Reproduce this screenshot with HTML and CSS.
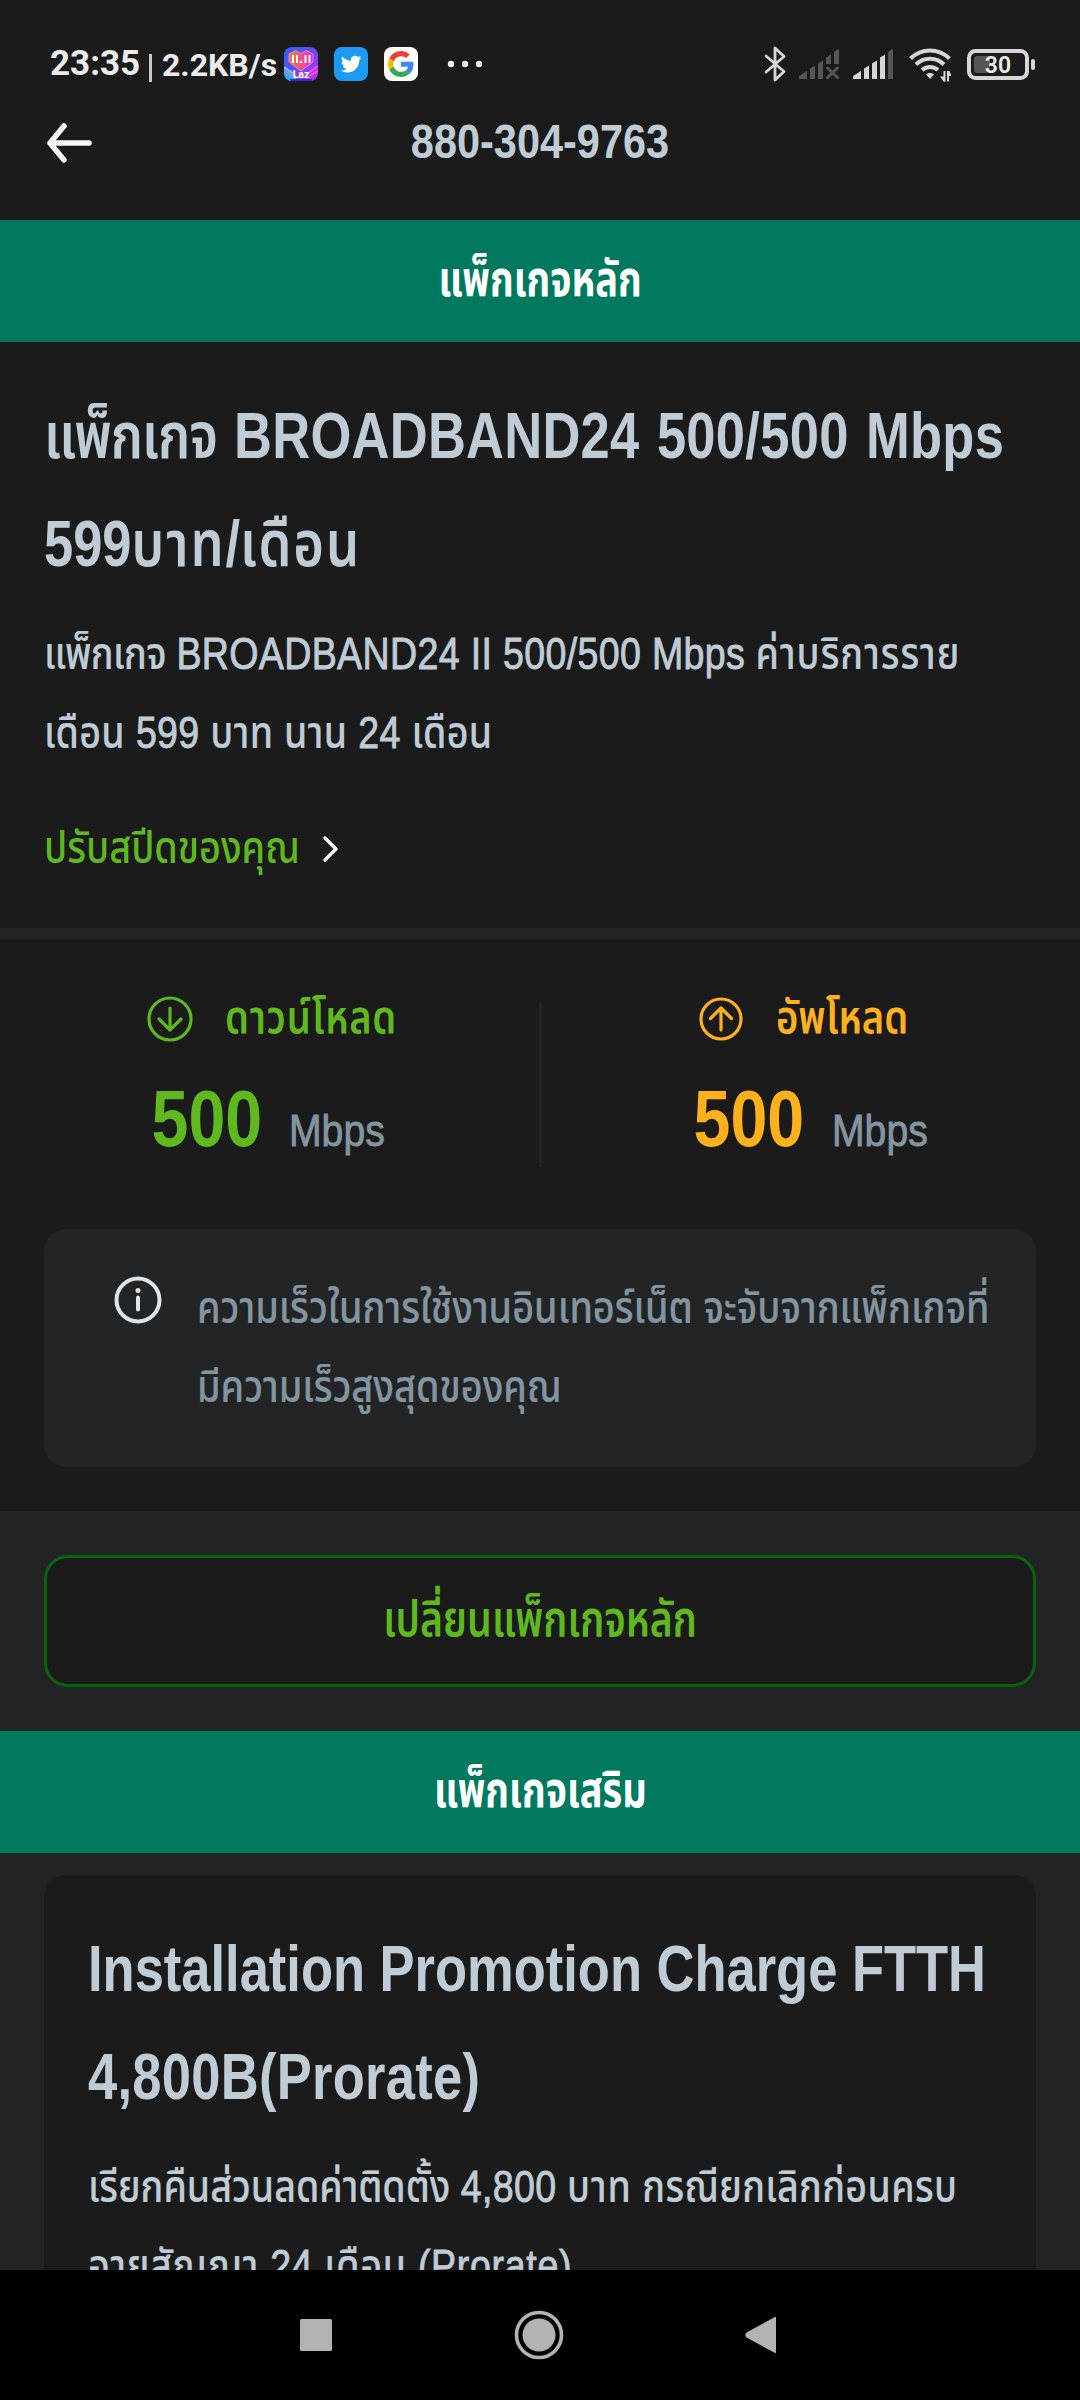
FILE: index.html
```html
<!DOCTYPE html>
<html lang="th">
<head>
<meta charset="utf-8">
<title>880-304-9763</title>
<link rel="stylesheet" href="styles.css">
</head>
<body>
<div class="screen">
  <div class="status">
    <span class="clock">23:35</span>
    <i class="pipe"></i>
    <span class="rate">2.2KB/s</span>
    <svg class="app laz" viewBox="0 0 34 34">
      <defs>
        <linearGradient id="lazBg" x1="0" y1="0" x2="1" y2="1"><stop offset="0" stop-color="#2f62ee"/><stop offset=".5" stop-color="#6a48f0"/><stop offset="1" stop-color="#d22cf0"/></linearGradient>
        <linearGradient id="lazHeart" x1="0" y1="0" x2="1" y2="0"><stop offset="0" stop-color="#f58226"/><stop offset=".5" stop-color="#f2527a"/><stop offset="1" stop-color="#e62bd0"/></linearGradient>
        <clipPath id="lazClip"><rect width="34" height="34" rx="8"/></clipPath>
      </defs>
      <g clip-path="url(#lazClip)">
        <rect width="34" height="34" fill="url(#lazBg)"/>
        <path d="M0 19l12 9v6H0z" fill="#26b4f5"/>
        <path d="M0 23l10 6M34 19l-11 8M34 24l-9 5" stroke="#ff5cf0" stroke-width="1.5"/>
        <path d="M0 20l9 6" stroke="#5fe4ff" stroke-width="1.5"/>
        <path d="M5 7l7-3.500 5 3 5-3 7 3.500v8l-12 9-12-9z" fill="url(#lazHeart)" stroke="#c58cff" stroke-width="1"/>
        <path d="M9 8v8M13 8v8M21.500 8v8M25.500 8v8" stroke="#fff" stroke-width="2"/>
        <circle cx="17" cy="15" r="1.300" fill="#fff"/>
        <path d="M6 33h22" stroke="#3a2bd0" stroke-width="2"/>
      </g>
      <text x="17" y="30.500" class="laz-text" text-anchor="middle">Laz</text>
    </svg>
    <svg class="app" viewBox="0 0 34 34">
      <rect width="34" height="34" rx="8" fill="#1d9bf0"/>
      <path transform="translate(6.800 6.800) scale(.86)" fill="#fff" d="M23.953 4.570a10 10 0 01-2.825.775 4.958 4.958 0 002.163-2.723c-.951.555-2.005.959-3.127 1.184a4.920 4.920 0 00-8.384 4.482C7.690 8.095 4.067 6.130 1.640 3.162a4.822 4.822 0 00-.666 2.475c0 1.710.870 3.213 2.188 4.096a4.904 4.904 0 01-2.228-.616v.060a4.923 4.923 0 003.946 4.827 4.996 4.996 0 01-2.212.085 4.936 4.936 0 004.604 3.417 9.867 9.867 0 01-6.102 2.105c-.390 0-.779-.023-1.170-.067a13.995 13.995 0 007.557 2.209c9.053 0 13.998-7.496 13.998-13.985 0-.210 0-.420-.015-.630A9.935 9.935 0 0024 4.590z"/>
    </svg>
    <svg class="app" viewBox="0 0 34 34">
      <rect width="34" height="34" rx="8" fill="#fff"/>
      <g transform="translate(4 4) scale(.5417)">
        <path fill="#EA4335" d="M24 9.500c3.540 0 6.710 1.220 9.210 3.600l6.850-6.850C35.900 2.380 30.470 0 24 0 14.620 0 6.510 5.380 2.560 13.220l7.980 6.190C12.430 13.720 17.740 9.500 24 9.500z"/>
        <path fill="#4285F4" d="M46.980 24.550c0-1.570-.150-3.090-.380-4.550H24v9.020h12.940c-.580 2.960-2.260 5.480-4.780 7.180l7.730 6c4.510-4.180 7.090-10.360 7.090-17.650z"/>
        <path fill="#FBBC05" d="M10.530 28.590c-.480-1.450-.760-2.990-.760-4.590s.270-3.140.760-4.590l-7.980-6.190C.920 16.460 0 20.120 0 24c0 3.880.920 7.540 2.560 10.780l7.970-6.190z"/>
        <path fill="#34A853" d="M24 48c6.480 0 11.930-2.130 15.890-5.810l-7.730-6c-2.150 1.450-4.920 2.300-8.160 2.300-6.260 0-11.570-4.220-13.470-9.910l-7.980 6.190C6.510 42.620 14.620 48 24 48z"/>
      </g>
    </svg>
    <svg class="more" viewBox="0 0 36 8" fill="#f2f2f2"><circle cx="4" cy="4" r="3.200"/><circle cx="18" cy="4" r="3.200"/><circle cx="32" cy="4" r="3.200"/></svg>

    <svg class="bt" viewBox="0 0 22 36" fill="none" stroke="#d6d6d6" stroke-width="2.800" stroke-linejoin="round" stroke-linecap="round"><path d="M2 10l18 15.500-9 8.500V2l9 8.500L2 26"/></svg>
    <svg class="signal" viewBox="0 0 40 30" fill="#565656">
      <path d="M0 30v-3l8-5v8zM11 30V19.500l5-3V30zM19 30V14.500l5-3V30zM27 15V8.500l5-3V15zM35 15V3.500L38 .500Q40-.500 40 1.500V15z"/>
      <path d="M28.500 19l10 9.500M38.500 19l-10 9.500" stroke="#565656" stroke-width="3" stroke-linecap="round"/>
    </svg>
    <svg class="signal two" viewBox="0 0 40 30" fill="#d6d6d6">
      <path d="M0 30v-3l8-5v8zM11 30V19.500l5-3V30zM19 30V14.500l5-3V30zM27 30V8.500l5-3V30z"/>
      <path fill="#565656" d="M35 30V3.500L38 .500Q40-.500 40 1.500V30z"/>
    </svg>
    <svg class="wifi" viewBox="0 0 42 36" fill="none" stroke="#d6d6d6" stroke-width="4">
      <path d="M1.500 12.500a27.500 27.500 0 0139 0M7 18.500a20 20 0 0128 0M13 24a12 12 0 0116 0"/>
      <path d="M21 33l-4-4.500q4-3.500 8 0z" fill="#d6d6d6" stroke="none"/>
      <path d="M35.500 25v10.500M39 25v10.500" stroke-width="2"/>
      <path d="M36 35.500h-1.500L31 30.500h4zM39 25h1.500l2 5h-4z" fill="#d6d6d6" stroke="none"/>
    </svg>
    <svg class="battery" viewBox="0 0 69 32">
      <rect x="2" y="3" width="58" height="27" rx="6.500" fill="none" stroke="#d6d6d6" stroke-width="4"/>
      <rect x="7" y="8" width="16" height="17" rx="3" fill="#565656"/>
      <rect x="64" y="11" width="4" height="11" rx="2" fill="#d6d6d6"/>
      <text x="31" y="25" class="battery-text" text-anchor="middle">30</text>
    </svg>
  </div>

  <header class="header">
    <svg class="back" viewBox="0 0 46 42" fill="none" stroke="#f4f7fa" stroke-width="5.500" stroke-linecap="round" stroke-linejoin="round"><path d="M43 21H4M18 4L4 21l14 17"/></svg>
    <h1 class="title">880-304-9763</h1>
  </header>

  <div class="banner"><span>แพ็กเกจหลัก</span></div>

  <section class="plan">
    <h2 class="heading">
      <div class="line"><span class="tight">แพ็กเกจ</span> <span class="latin">BROADBAND24 500/500 Mbps</span></div>
      <div class="line">599<span class="loose">บาท</span>/<span class="loose">เดือน</span></div>
    </h2>
    <div class="copy">
      <div class="line"><span class="tight">แพ็กเกจ</span> <span class="latin">BROADBAND24 II 500/500 Mbps</span> <span class="loose">ค่าบริการราย</span></div>
      <div class="line even">เดือน <span class="latin">599</span> บาท นาน <span class="latin">24</span> เดือน</div>
    </div>
    <a class="tune">
      <div class="tune-text">ปรับสปีดของคุณ</div>
      <svg class="chev" viewBox="0 0 18 28" fill="none" stroke="#eef2f5" stroke-width="3.500" stroke-linecap="round" stroke-linejoin="round"><path d="M3 3l11 11L3 25"/></svg>
    </a>
  </section>

  <section class="speed">
    <div class="meters">
      <div class="meter down">
        <div class="meter-head">
          <svg class="dir" viewBox="0 0 46 46" fill="none" stroke="currentColor" stroke-width="3.200" stroke-linecap="round" stroke-linejoin="round"><circle cx="23" cy="23" r="21"/><path d="M23 12v22M12 23l11 11 11-11"/></svg>
          <div class="dir-text">ดาวน์โหลด</div>
        </div>
        <div class="meter-value"><div class="num">500</div><div class="unit">Mbps</div></div>
      </div>
      <i class="split"></i>
      <div class="meter up">
        <div class="meter-head">
          <svg class="dir" viewBox="0 0 46 46" fill="none" stroke="currentColor" stroke-width="3.200" stroke-linecap="round" stroke-linejoin="round"><circle cx="23" cy="23" r="20"/><path d="M23 34V12M12.500 22.500L23 12l10.500 10.500"/></svg>
          <div class="dir-text">อัพโหลด</div>
        </div>
        <div class="meter-value"><div class="num">500</div><div class="unit">Mbps</div></div>
      </div>
    </div>
    <div class="note">
      <svg class="info" viewBox="0 0 48 48" fill="none" stroke="#dde5eb" stroke-width="4"><circle cx="24" cy="24" r="21.500"/><path d="M24 21.500v12" stroke-linecap="round"/><circle cx="24" cy="14.500" r="2.500" fill="#dde5eb" stroke="none"/></svg>
      <div class="copy muted">
        <div class="line">ความเร็วในการใช้งานอินเทอร์เน็ต จะจับจากแพ็กเกจที่</div>
        <div class="line">มีความเร็วสูงสุดของคุณ</div>
      </div>
    </div>
  </section>

  <button class="change"><span>เปลี่ยนแพ็กเกจหลัก</span></button>

  <div class="banner"><span>แพ็กเกจเสริม</span></div>

  <section class="card">
    <h2 class="heading">
      <div class="line">Installation Promotion Charge FTTH</div>
      <div class="line"><span class="latin">4,800B(Prorate)</span></div>
    </h2>
    <div class="copy">
      <div class="line">เรียกคืนส่วนลดค่าติดตั้ง <span class="latin">4,800</span> <span class="loose">บาท</span> <span class="even">กรณียกเลิกก่อนครบ</span></div>
      <div class="line wide">อายุสัญญา <span class="latin">24</span> เดือน <span class="latin">(Prorate)</span></div>
    </div>
  </section>
</div>
<nav class="nav">
  <svg class="nav-icon" viewBox="0 0 32 32"><rect width="32" height="32" rx="1.500"/></svg>
  <svg class="nav-home" viewBox="0 0 50 50"><circle cx="25" cy="25" r="16.500"/><circle cx="25" cy="25" r="22.500" fill="none" stroke="#b3b3b3" stroke-width="3.600"/></svg>
  <svg class="nav-back" viewBox="0 0 31 38"><path d="M29 1.500Q31 0 31 2v34q0 2-2 .5L1.500 21.500q-2.500-2.500 0-5z"/></svg>
</nav>
</body>
</html>
```
FILE: styles.css
```css
* { box-sizing: border-box; }
body { margin: 0; background: #000; width: 1080px; font-family: "Liberation Sans", "Noto Sans Thai", sans-serif; }
h1, h2 { margin: 0; }
svg { display: block; flex: none; }

.screen { height: 2270px; overflow: hidden; background: #222325; display: flex; flex-direction: column; }
.screen > * { flex: none; }

.status { height: 88px; padding: 40px 44px 0 50px; background: #1b1b1b; display: flex; align-items: center; font-family: Roboto, sans-serif; color: #ebebeb; white-space: nowrap; }
.clock { width: 99px; font-size: 35px; line-height: 48px; font-weight: 700; }
.pipe { width: 3px; height: 28px; background: #c8c8c8; margin: 8px 10px 0 0; }
.rate { width: 122px; font-size: 32px; line-height: 48px; font-weight: 700; padding-top: 2px; }
.app { width: 34px; height: 34px; margin-right: 16px; }
.laz-text { font: 700 10.500px Roboto, sans-serif; fill: #fff; }
.more { width: 36px; height: 8px; margin-left: 13px; margin-right: auto; }
.bt { width: 22px; height: 36px; margin-right: 13px; }
.signal { width: 40px; height: 30px; }
.signal.two { margin: 0 16px 0 14px; }
.wifi { width: 42px; height: 36px; margin-right: 16px; }
.battery { width: 69px; height: 32px; }
.battery-text { font: 600 23px Roboto, sans-serif; fill: #ebebeb; }

.header { height: 132px; padding: 0 45px 24px 46px; background: #1b1b1b; display: flex; align-items: center; }
.back { width: 46px; height: 42px; margin-top: 2px; }
.title { flex: 1; margin: -2px 47px 0 0; text-align: center; font-size: 48.500px; line-height: 60px; font-weight: 700; color: #bfccd6; transform: scaleX(.855); }

.banner { height: 122px; background: #00795f; color: #fff; text-align: center; font-size: 49px; line-height: 118px; font-weight: 700; }
.banner span { display: inline-block; transform: scaleX(.775); }

.plan { background: #1b1b1b; padding: 40px 44px 41px; height: 586px; }
.heading, .copy, .tune, .meters { white-space: nowrap; color: #bfccd6; }
.heading { font-size: 64px; line-height: 108px; font-weight: 600; word-spacing: 3px; }
.card .heading { word-spacing: 0; }
.line { transform-origin: 0 0; }
.heading .line { transform: scaleX(.82); }
.heading .latin { letter-spacing: .35px; }
.heading .tight { letter-spacing: -.02em; }
.heading .loose { letter-spacing: .037em; }
.copy { margin-top: 16px; font-size: 45px; line-height: 79px; font-weight: 500; -webkit-text-stroke: .2px; }
.copy .line { transform: scaleX(.835); }
.copy .latin { letter-spacing: .4px; -webkit-text-stroke: .9px; }
.copy .tight { letter-spacing: -.7px; }
.copy .loose { letter-spacing: 1.200px; }
.copy .even { letter-spacing: .4px; }
.copy .wide, .copy .wide .latin { letter-spacing: .8px; }
.tune { margin-top: 36px; display: flex; align-items: center; color: #5fb81e; }
.tune-text { width: 278px; font-size: 45px; line-height: 79px; font-weight: 500; transform: scaleX(.84); transform-origin: 0 0; }
.chev { width: 18px; height: 28px; margin-top: 2px; }

.speed { margin-top: 11px; background: #1b1b1b; height: 572px; padding: 48px 44px 44px; }
.meters { display: grid; grid-template-columns: 495px 3px 494px; height: 242px; }
.meter-head { display: flex; align-items: center; height: 60px; }
.dir { width: 46px; height: 46px; margin-top: 3px; }
.dir-text { font-size: 46px; line-height: 60px; font-weight: 600; transform: scaleX(.83); transform-origin: 0 0; }
.meter-value { margin-top: 27px; display: flex; line-height: 90px; }
.num { font-size: 79px; font-weight: 700; transform: scaleX(.84); transform-origin: 0 0; }
.unit { font-size: 45px; line-height: 113px; color: #8295a1; transform: scaleX(.87); transform-origin: 0 0; -webkit-text-stroke: .9px; }
.down { padding-left: 103px; color: #5fb81e; }
.down .dir-text { margin-left: 32px; letter-spacing: .9px; }
.down .num { width: 139px; padding-left: 3px; margin-left: 2px; }
.down .unit { margin-left: 1px; }
.up { padding-left: 156px; color: #ffb11b; }
.up .dir-text { margin-left: 32px; }
.up .num { width: 139px; margin-left: -7px; padding-left: 3px; }
.up .unit { margin-left: 2px; }
.split { height: 165px; margin-top: 15px; background: #222325; }
.note { height: 238px; border-radius: 22px; background: #222426; padding: 39px 40px 0 70px; display: flex; align-items: flex-start; }
.info { width: 48px; height: 48px; margin-top: 8px; }
.note .copy { margin: 0 0 0 35px; color: #8295a1; }
.note .line { transform: scaleX(.841); }

.change { display: block; width: 992px; height: 132px; margin: 44px; padding: 0 0 5px; border: 3px solid #08640b; border-radius: 24px; background: #1b1b1b; color: #5fb81e; font-family: inherit; font-size: 49px; line-height: 120px; font-weight: 600; }
.change span { display: inline-block; transform: scaleX(.8); }

.card { margin: 22px 44px 0; padding: 40px 44px; background: #1b1b1b; border-radius: 22px 22px 0 0; height: 420px; }

.nav { height: 130px; display: flex; align-items: center; background: #000; padding-left: 300px; fill: #b3b3b3; }
.nav-icon { width: 32px; height: 32px; }
.nav-home { width: 50px; height: 50px; margin: 0 181px 0 182px; }
.nav-back { width: 31px; height: 38px; }
```
